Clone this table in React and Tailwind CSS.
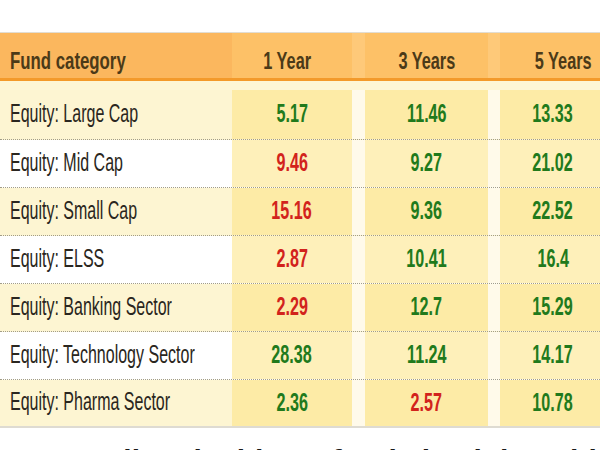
import React from "react";

const rows = [
  { name: "Equity: Large Cap", vals: [["5.17", "g"], ["11.46", "g"], ["13.33", "g"]] },
  { name: "Equity: Mid Cap", vals: [["9.46", "r"], ["9.27", "g"], ["21.02", "g"]] },
  { name: "Equity: Small Cap", vals: [["15.16", "r"], ["9.36", "g"], ["22.52", "g"]] },
  { name: "Equity: ELSS", vals: [["2.87", "r"], ["10.41", "g"], ["16.4", "g"]] },
  { name: "Equity: Banking Sector", vals: [["2.29", "r"], ["12.7", "g"], ["15.29", "g"]] },
  { name: "Equity: Technology Sector", vals: [["28.38", "g"], ["11.24", "g"], ["14.17", "g"]] },
  { name: "Equity: Pharma Sector", vals: [["2.36", "g"], ["2.57", "r"], ["10.78", "g"]] },
];

const grid = "grid grid-cols-[232px_120px_13px_123px_12px_100px]";

function Num({ value, tone }) {
  return (
    <span
      className={`inline-block origin-center scale-x-[0.62] text-[26px] font-bold leading-none ${
        tone === "r" ? "text-[#d2231c]" : "text-[#217a1c]"
      }`}
    >
      {value}
    </span>
  );
}

export default function App() {
  return (
    <div className="h-[450px] w-[600px] overflow-hidden bg-white font-['Liberation_Sans',Arial,sans-serif]">
      <div className="h-[32px]" />
      <div className="border-t border-[#e2ddd2]">
        {/* header */}
        <div className={`${grid} h-[48px] border-b-[3px] border-[#f39a2b] text-[24px] font-bold leading-none text-[#4b3a18]`}>
          <div className="flex items-end bg-[#fbb75e] pb-[5px] pl-[10px]">
            <span className="inline-block origin-left scale-x-[0.7] whitespace-nowrap">Fund category</span>
          </div>
          <div className="flex items-end justify-center bg-[#fdc167] pb-[5px] pr-[10px]">
            <span className="inline-block origin-center scale-x-[0.68] whitespace-nowrap">1 Year</span>
          </div>
          <div className="bg-[#fec979]" />
          <div className="flex items-end justify-center bg-[#fdc167] pb-[5px]">
            <span className="inline-block origin-center scale-x-[0.68] whitespace-nowrap">3 Years</span>
          </div>
          <div className="bg-[#fec979]" />
          <div className="flex items-end justify-end bg-[#fdc167] pb-[5px] pr-[8px]">
            <span className="inline-block origin-right scale-x-[0.68] whitespace-nowrap">5 Years</span>
          </div>
        </div>

        {/* body */}
        {rows.map((row, i) => {
          const odd = i % 2 === 0;
          const first = i === 0;
          return (
            <div
              key={row.name}
              className={`${grid} ${first ? "h-[59px] pt-[9px]" : "h-[48px]"} ${
                i < rows.length - 1 ? "border-b border-dotted border-[#a29d88]" : "border-b-2 border-[#dedbd2]"
              } ${odd ? "bg-[#fdf6d6]" : "bg-[#fffef9]"}`}
            >
              <div className={`flex items-center pb-[3px] pl-[10px] ${odd ? "bg-[#fdf5d2]" : "bg-white"}`}>
                <span className="inline-block origin-left scale-x-[0.64] whitespace-nowrap text-[25px] leading-none text-[#2a2620]">
                  {row.name}
                </span>
              </div>
              <div className={`flex items-center justify-center pb-[3px] ${odd ? "bg-[#fdeba6]" : "bg-[#fef0ba]"}`}>
                <Num value={row.vals[0][0]} tone={row.vals[0][1]} />
              </div>
              <div className="bg-[#fffaea]" />
              <div className={`flex items-center justify-center pb-[3px] ${odd ? "bg-[#fdeba6]" : "bg-[#fef0ba]"}`}>
                <Num value={row.vals[1][0]} tone={row.vals[1][1]} />
              </div>
              <div className="bg-[#fffaea]" />
              <div className={`flex items-center justify-center pb-[3px] pl-[6px] ${odd ? "bg-[#fdeba6]" : "bg-[#fef0ba]"}`}>
                <Num value={row.vals[2][0]} tone={row.vals[2][1]} />
              </div>
            </div>
          );
        })}
      </div>
      <p className="mt-[15px] whitespace-nowrap pl-[60px] text-[30px] font-bold leading-[36px] text-[#1a1a1a]">
        Small and mid cap funds lead the table on returns
      </p>
    </div>
  );
}
